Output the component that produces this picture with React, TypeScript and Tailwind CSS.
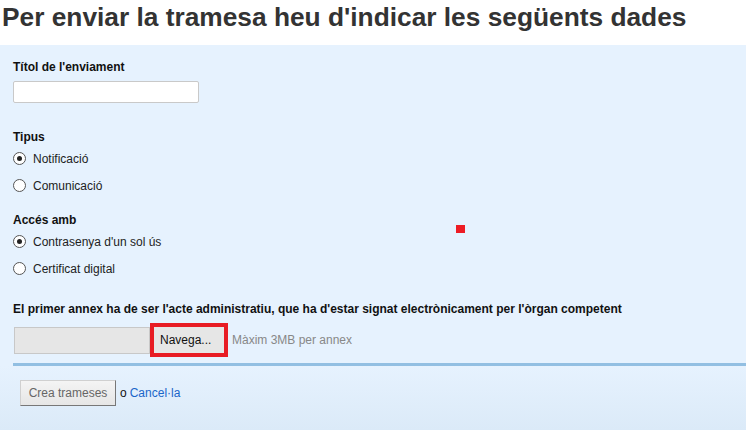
import React from 'react';

function Radio({ label, checked }: { label: string; checked?: boolean }) {
    return (
        <label className="flex items-center h-[27px] text-[12px] text-[#222]">
            <span className="ml-[13px] mr-[7px] w-[13px] h-[13px] rounded-full border border-[#555] bg-white flex items-center justify-center">
                {checked && <span className="w-[5px] h-[5px] rounded-full bg-[#222]" />}
            </span>
            {label}
        </label>
    );
}

export default function App() {
    return (
        <div className="relative w-[746px] h-[430px] overflow-hidden bg-white font-['Liberation_Sans',Arial,sans-serif]">
            <h1 className="h-[45px] pl-[2px] pt-[2px] text-[26.3px] leading-[30px] font-bold text-[#333]">
                Per enviar la tramesa heu d'indicar les següents dades
            </h1>

            <div className="h-[385px] flex flex-col bg-[#e6f2fe]">
                <div className="px-[13px] pt-[15px]">
                    <div className="text-[12px] leading-[14px] font-bold text-[#111]">Títol de l'enviament</div>
                    <div className="mt-[7px] w-[186px] h-[22px] bg-white border border-[#c9c9c9] rounded-[2px]" />
                </div>

                <div className="mt-[27px] px-[13px] text-[12px] leading-[14px] font-bold text-[#111]">Tipus</div>
                <div className="mt-[1px]">
                    <Radio label="Notificació" checked />
                    <Radio label="Comunicació" />
                </div>

                <div className="mt-[14px] px-[13px] text-[12px] leading-[14px] font-bold text-[#111]">Accés amb</div>
                <div className="mt-[1px]">
                    <Radio label="Contrasenya d'un sol ús" checked />
                    <Radio label="Certificat digital" />
                </div>

                <div className="mt-[20px] px-[13px] text-[12px] leading-[14px] font-bold text-[#111]">
                    El primer annex ha de ser l'acte administratiu, que ha d'estar signat electrònicament per l'òrgan competent
                </div>

                <div className="mt-[7px] ml-[14px] flex items-center h-[34px]">
                    <div className="w-[136px] h-[27px] bg-[#e6e6e6] border border-[#c8c8c8]" />
                    <div className="w-[78px] h-[34px] border-[4px] border-[#e81c24] flex items-center justify-center">
                        <span className="w-full h-full bg-[#e6e6e6] flex items-center pl-[6px] text-[12px] text-[#111]">Navega...</span>
                    </div>
                    <span className="ml-[4px] text-[12px] text-[#888]">Màxim 3MB per annex</span>
                </div>

                <div className="mt-[6px] ml-[13px] h-[3px] bg-[#92bfe2]" />

                <div className="flex-1 bg-gradient-to-b from-[#e6f2fe] to-[#dbeaf8] px-[20px] pt-[14px]">
                    <div className="flex items-center text-[12px]">
                        <button className="w-[96px] h-[26px] bg-gradient-to-b from-[#f4f4f4] to-[#e6e6e6] border border-[#d0d0d0] border-r-[#777] border-b-[#777] text-[#666]">
                            Crea trameses
                        </button>
                        <span className="ml-[4px] text-[#111]">o</span>
                        <a className="ml-[3px] text-[#1a66c9]">Cancel·la</a>
                    </div>
                </div>
            </div>

            <div className="absolute left-[456px] top-[225px] w-[9px] h-[8px] bg-[#ed1c24]" />
        </div>
    );
}
